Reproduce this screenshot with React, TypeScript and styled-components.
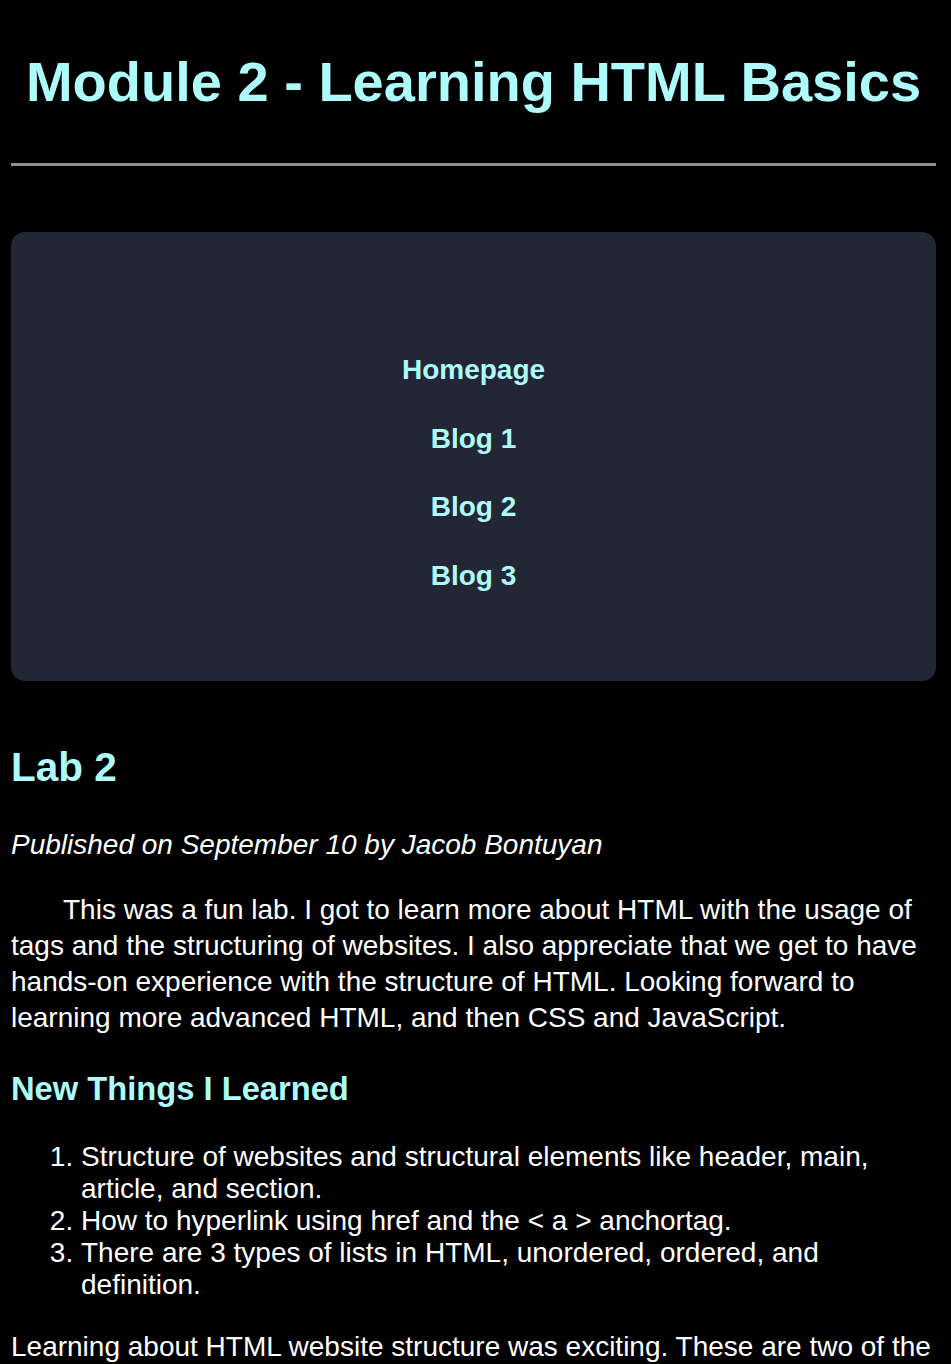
import React from "react";
import styled, { createGlobalStyle } from "styled-components";

const GlobalStyle = createGlobalStyle`
  html, body {
    margin: 0;
    padding: 0;
    background: #000000;
  }
  body {
    font-family: "Liberation Sans", Arial, sans-serif;
    color: #ffffff;
  }
`;

const accent = "#adfbfb";

const Page = styled.div`
  padding: 0 15px 0 11px;
  display: flex;
  flex-direction: column;
`;

const Title = styled.h1`
  margin: 50px 0 0;
  font-size: 56px;
  line-height: 64px;
  font-weight: 700;
  text-align: center;
  color: ${accent};
`;

const Rule = styled.div`
  margin-top: 49px;
  height: 3px;
  background: #8f8f8f;
`;

const Nav = styled.nav`
  margin-top: 66px;
  background: #232634;
  border-radius: 14px;
  padding: 122px 0 90px;
  display: flex;
  flex-direction: column;
  align-items: center;
  gap: 37.7px;
`;

const NavLink = styled.a`
  font-size: 28px;
  line-height: 31px;
  font-weight: 700;
  color: ${accent};
  text-decoration: none;
`;

const Article = styled.article`
  display: flex;
  flex-direction: column;
`;

const Heading = styled.h2`
  margin: 63px 0 0;
  font-size: 40.5px;
  line-height: 46px;
  font-weight: 700;
  color: ${accent};
`;

const Byline = styled.p`
  margin: 37px 0 0;
  font-size: 28px;
  line-height: 36px;
  font-style: italic;
`;

const Paragraph = styled.p<{ $indent?: boolean; $top: number }>`
  margin: ${(p) => p.$top}px 0 0;
  font-size: 28px;
  line-height: 36px;
  text-indent: ${(p) => (p.$indent ? "52px" : "0")};
`;

const SubHeading = styled.h3`
  margin: 34px 0 0;
  font-size: 32.7px;
  line-height: 37px;
  font-weight: 700;
  color: ${accent};
`;

const List = styled.ol`
  margin: 34px 0 0;
  padding-left: 70px;
  font-size: 28px;
  line-height: 32px;
`;

const Item = styled.li``;

export default function App() {
  return (
    <>
      <GlobalStyle />
      <Page>
        <Title>Module 2 - Learning HTML Basics</Title>
        <Rule />
        <Nav>
          <NavLink href="#">Homepage</NavLink>
          <NavLink href="#">Blog 1</NavLink>
          <NavLink href="#">Blog 2</NavLink>
          <NavLink href="#">Blog 3</NavLink>
        </Nav>
        <Article>
          <Heading>Lab 2</Heading>
          <Byline>Published on September 10 by Jacob Bontuyan</Byline>
          <Paragraph $indent $top={29}>
            This was a fun lab. I got to learn more about HTML with the usage of
            tags and the structuring of websites. I also appreciate that we get to
            have hands-on experience with the structure of HTML. Looking forward to
            learning more advanced HTML, and then CSS and JavaScript.
          </Paragraph>
          <SubHeading>New Things I Learned</SubHeading>
          <List>
            <Item>
              Structure of websites and structural elements like header, main,
              article, and section.
            </Item>
            <Item>How to hyperlink using href and the &lt; a &gt; anchortag.</Item>
            <Item>
              There are 3 types of lists in HTML, unordered, ordered, and
              definition.
            </Item>
          </List>
          <Paragraph $top={28}>
            Learning about HTML website structure was exciting. These are two of the
            most important things I learned about building a website with HTML.
          </Paragraph>
        </Article>
      </Page>
    </>
  );
}
